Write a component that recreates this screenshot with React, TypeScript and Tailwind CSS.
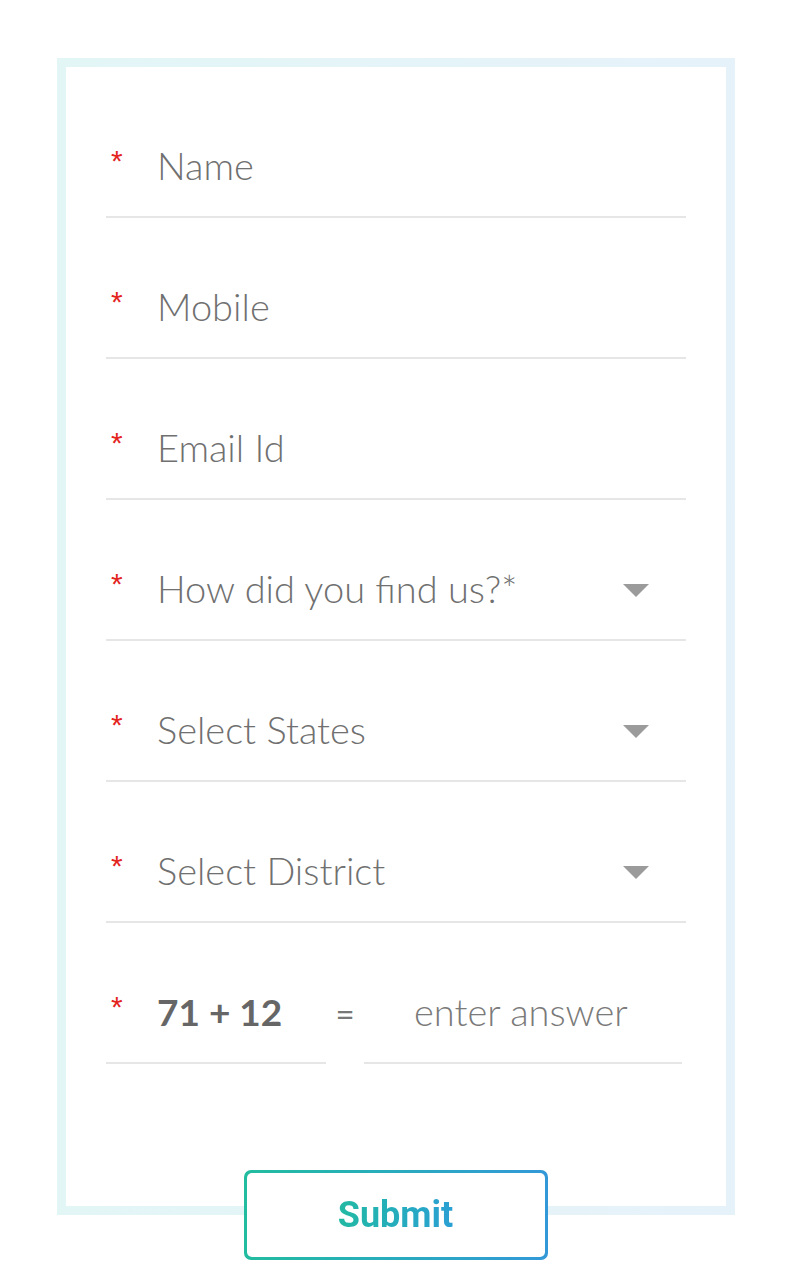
const fields = [
  { label: "Name", select: false },
  { label: "Mobile", select: false },
  { label: "Email Id", select: false },
  { label: "How did you find us?*", select: true },
  { label: "Select States", select: true },
  { label: "Select District", select: true },
]

function Star() {
  return (
    <span className="w-[51px] shrink-0 pl-[5px] text-[30px] leading-none text-[#e3241f] -mt-[12px] font-['Liberation_Sans',sans-serif]">
      *
    </span>
  )
}

function Caret() {
  return (
    <svg width="26" height="13" viewBox="0 0 26 13" className="shrink-0 mr-[37px]">
      <path d="M0 0 H26 L13 13 Z" fill="#9b9b9b" />
    </svg>
  )
}

function Field({ label, select }: { label: string; select: boolean }) {
  return (
    <div className="flex h-[100px] items-center border-b-2 border-[#e6e6e6] mt-[41px] first:mt-0">
      <Star />
      <span className="flex-1 -mt-[3px] text-[38px] font-light text-[#707070]">{label}</span>
      {select && <Caret />}
    </div>
  )
}

export default function App() {
  return (
    <div className="min-h-[1280px] bg-white pt-[58px] font-['Lato',sans-serif]">
      <div className="ml-[57px] w-[678px] bg-gradient-to-r from-[#e3f6f6] to-[#e6f2fa] p-[9px]">
        <div className="bg-white px-[40px] pt-[51px] pb-[142px]">
          {fields.map((f) => (
            <Field key={f.label} {...f} />
          ))}
          <div className="mt-[41px] flex h-[100px] items-center">
            <div className="flex h-full w-[220px] items-center border-b-2 border-[#e6e6e6]">
              <Star />
              <span className="-mt-[3px] text-[37px] font-bold text-[#666666]">71 + 12</span>
            </div>
            <div className="flex h-full w-[38px] items-center justify-center text-[33px] text-[#777777]">
              =
            </div>
            <div className="flex h-full w-[318px] items-center border-b-2 border-[#e6e6e6] pl-[50px]">
              <span className="-mt-[3px] text-[38px] font-light text-[#7a7a7a]">enter answer</span>
            </div>
          </div>
        </div>
      </div>
      <div className="relative z-10 -mt-[45px] flex justify-center">
        <div className="h-[90px] w-[304px] rounded-[7px] bg-gradient-to-r from-[#22bc9f] to-[#3398d8] p-[3px]">
          <div className="flex h-full w-full items-center justify-center rounded-[5px] bg-white">
            <span className="bg-gradient-to-r from-[#23b9a3] to-[#2b9fd3] bg-clip-text font-['Roboto',sans-serif] text-[36px] font-bold text-transparent">
              Submit
            </span>
          </div>
        </div>
      </div>
    </div>
  )
}
